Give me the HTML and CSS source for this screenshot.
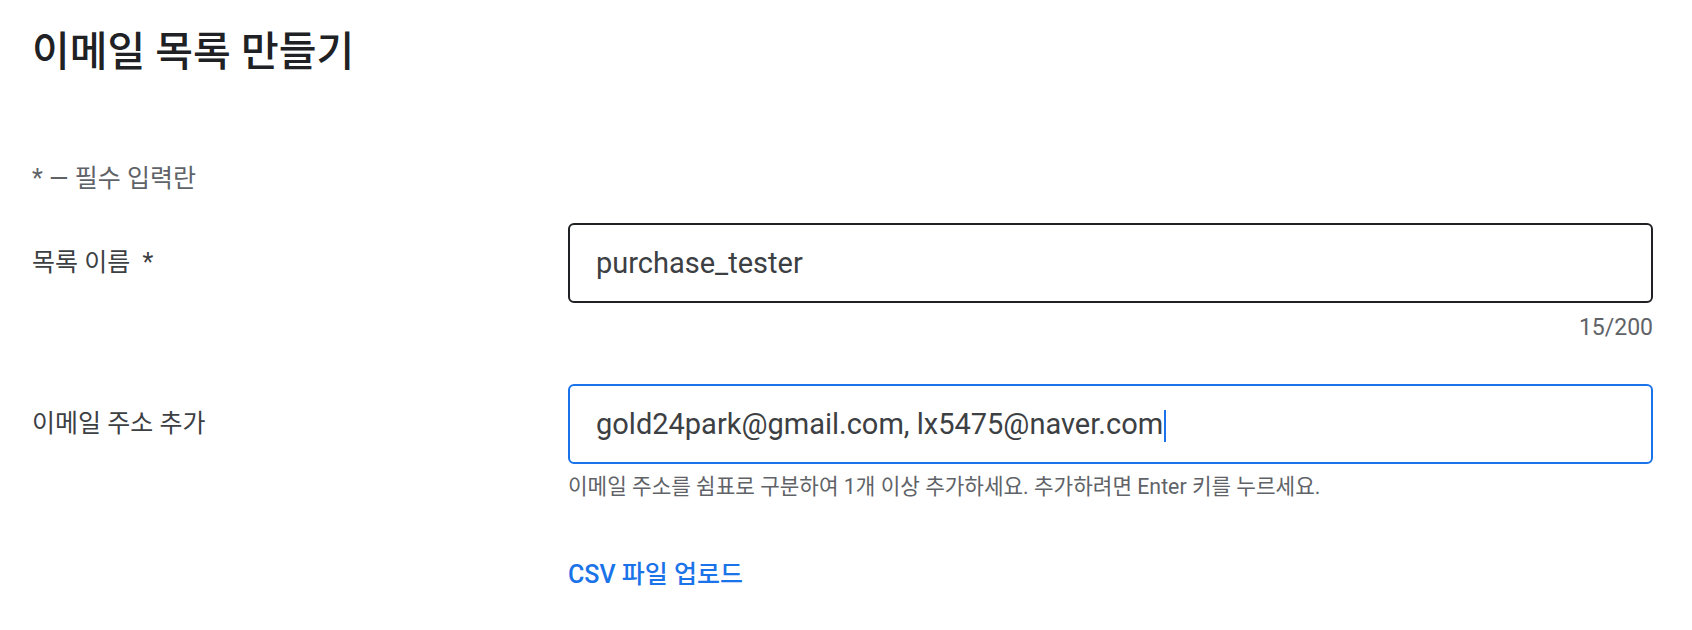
FILE: index.html
```html
<!DOCTYPE html>
<html lang="ko">
<head>
  <meta charset="UTF-8">
  <meta name="viewport" content="width=device-width, initial-scale=1">
  <title>이메일 목록 만들기</title>
  <link rel="stylesheet" href="styles.css">
</head>
<body>

  <div class="page">
    <h1 class="page-title">이메일 목록 만들기</h1>

    <p class="required-note">* — 필수 입력란</p>

    <div class="form-row">
      <label class="form-label">목록 이름 <span class="star">*</span></label>
      <div class="form-field">
        <div class="text-field">purchase_tester</div>
        <div class="counter">15/200</div>
      </div>
    </div>

    <div class="form-row form-row-emails">
      <label class="form-label">이메일 주소 추가</label>
      <div class="form-field">
        <div class="text-field is-focused">gold24park@gmail.com, lx5475@naver.com<span class="caret"></span></div>
        <div class="helper">이메일 주소를 쉼표로 구분하여 1개 이상 추가하세요. 추가하려면 Enter 키를 누르세요.</div>
        <a class="upload-link" href="#">CSV 파일 업로드</a>
      </div>
    </div>
  </div>

</body>
</html>
```

FILE: styles.css
```css
* {
  box-sizing: border-box;
}

body {
  margin: 0;
  padding: 0;
  background: #fff;
  font-family: Roboto, "Noto Sans CJK KR", sans-serif;
  color: #3c4043;
}

.page {
  padding: 24px 39px 0 32px;
}

.page-title {
  margin: 0;
  font-size: 41px;
  line-height: 56px;
  font-weight: 500;
  color: #202124;
}

.required-note {
  margin: 84px 0 0;
  font-size: 25px;
  line-height: 30px;
  color: #5f6368;
}

.form-row {
  display: grid;
  grid-template-columns: 536px 1fr;
  margin-top: 29px;
}

.form-row-emails {
  margin-top: 41px;
}

.form-label {
  font-size: 25px;
  line-height: 80px;
  color: #3c4043;
}

.form-label .star {
  margin-left: 6px;
}

.text-field {
  height: 80px;
  display: flex;
  align-items: center;
  padding: 0 26px;
  border: 2px solid #202124;
  border-radius: 6px;
  font-size: 29px;
  color: #3c4043;
}

.text-field.is-focused {
  border-color: #1a73e8;
}

.caret {
  display: inline-block;
  width: 2px;
  height: 32px;
  margin-left: 1px;
  margin-top: 3px;
  background: #1a73e8;
}

.counter {
  margin-top: 10px;
  text-align: right;
  font-size: 23px;
  line-height: 30px;
  color: #5f6368;
}

.helper {
  margin-top: 9px;
  font-size: 21.3px;
  line-height: 28px;
  color: #5f6368;
}

.upload-link {
  display: inline-block;
  margin-top: 58px;
  font-size: 25px;
  line-height: 32px;
  font-weight: 500;
  color: #1a73e8;
  text-decoration: none;
}
```
